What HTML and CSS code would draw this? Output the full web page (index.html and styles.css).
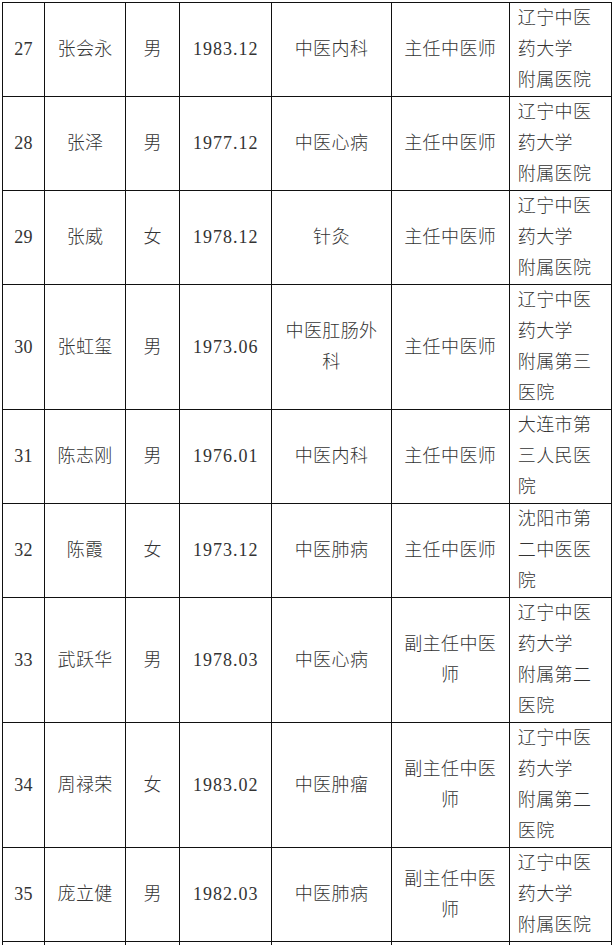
FILE: index.html
```html
<!DOCTYPE html>
<html lang="zh-CN">
<head>
<meta charset="utf-8">
<title>名单</title>
<link rel="stylesheet" href="styles.css">
</head>
<body>
<table class="roster">
  <colgroup>
    <col class="c-no"><col class="c-name"><col class="c-sex"><col class="c-birth"><col class="c-dept"><col class="c-title"><col class="c-org">
  </colgroup>
  <tbody>
    <tr class="r3"><td>27</td><td>张会永</td><td>男</td><td class="num">1983.12</td><td>中医内科</td><td>主任中医师</td><td class="org">辽宁中医<br>药大学<br>附属医院</td></tr>
    <tr class="r3"><td>28</td><td>张泽</td><td>男</td><td class="num">1977.12</td><td>中医心病</td><td>主任中医师</td><td class="org">辽宁中医<br>药大学<br>附属医院</td></tr>
    <tr class="r3"><td>29</td><td>张威</td><td>女</td><td class="num">1978.12</td><td>针灸</td><td>主任中医师</td><td class="org">辽宁中医<br>药大学<br>附属医院</td></tr>
    <tr class="r4"><td>30</td><td>张虹玺</td><td>男</td><td class="num">1973.06</td><td>中医肛肠外<br>科</td><td>主任中医师</td><td class="org">辽宁中医<br>药大学<br>附属第三<br>医院</td></tr>
    <tr class="r3"><td>31</td><td>陈志刚</td><td>男</td><td class="num">1976.01</td><td>中医内科</td><td>主任中医师</td><td class="org">大连市第<br>三人民医<br>院</td></tr>
    <tr class="r3"><td>32</td><td>陈霞</td><td>女</td><td class="num">1973.12</td><td>中医肺病</td><td>主任中医师</td><td class="org">沈阳市第<br>二中医医<br>院</td></tr>
    <tr class="r4"><td>33</td><td>武跃华</td><td>男</td><td class="num">1978.03</td><td>中医心病</td><td>副主任中医<br>师</td><td class="org">辽宁中医<br>药大学<br>附属第二<br>医院</td></tr>
    <tr class="r4"><td>34</td><td>周禄荣</td><td>女</td><td class="num">1983.02</td><td>中医肿瘤</td><td>副主任中医<br>师</td><td class="org">辽宁中医<br>药大学<br>附属第二<br>医院</td></tr>
    <tr class="r3"><td>35</td><td>庞立健</td><td>男</td><td class="num">1982.03</td><td>中医肺病</td><td>副主任中医<br>师</td><td class="org">辽宁中医<br>药大学<br>附属医院</td></tr>
    <tr class="r3"><td>&nbsp;</td><td></td><td></td><td></td><td></td><td></td><td class="org"></td></tr>
  </tbody>
</table>
</body>
</html>
```
FILE: styles.css
```css
html, body {
  margin: 0;
  padding: 0;
  background: #ffffff;
}

body {
  padding: 2px 0 0 2px;
  overflow: hidden;
}

.roster {
  border-collapse: collapse;
  table-layout: fixed;
  width: 610px;
  font-family: "Liberation Serif", "Noto Sans CJK SC", serif;
  font-size: 18px;
  font-weight: 300;
  color: #333333;
  letter-spacing: 0.4px;
}

.c-no { width: 42px; }
.c-name { width: 81px; }
.c-sex { width: 54px; }
.c-birth { width: 92px; }
.c-dept { width: 119px; }
.c-title { width: 118px; }
.c-org { width: 102px; }

.roster td {
  border: 1.6px solid #111111;
  text-align: center;
  vertical-align: middle;
  line-height: 31px;
  padding: 0;
  white-space: nowrap;
  overflow: hidden;
}

.roster td.num {
  letter-spacing: 1px;
}

.roster .r3 td { height: 93px; }
.roster .r4 td { height: 124px; }

.roster td.org {
  text-align: left;
  padding-left: 8px;
}
```
